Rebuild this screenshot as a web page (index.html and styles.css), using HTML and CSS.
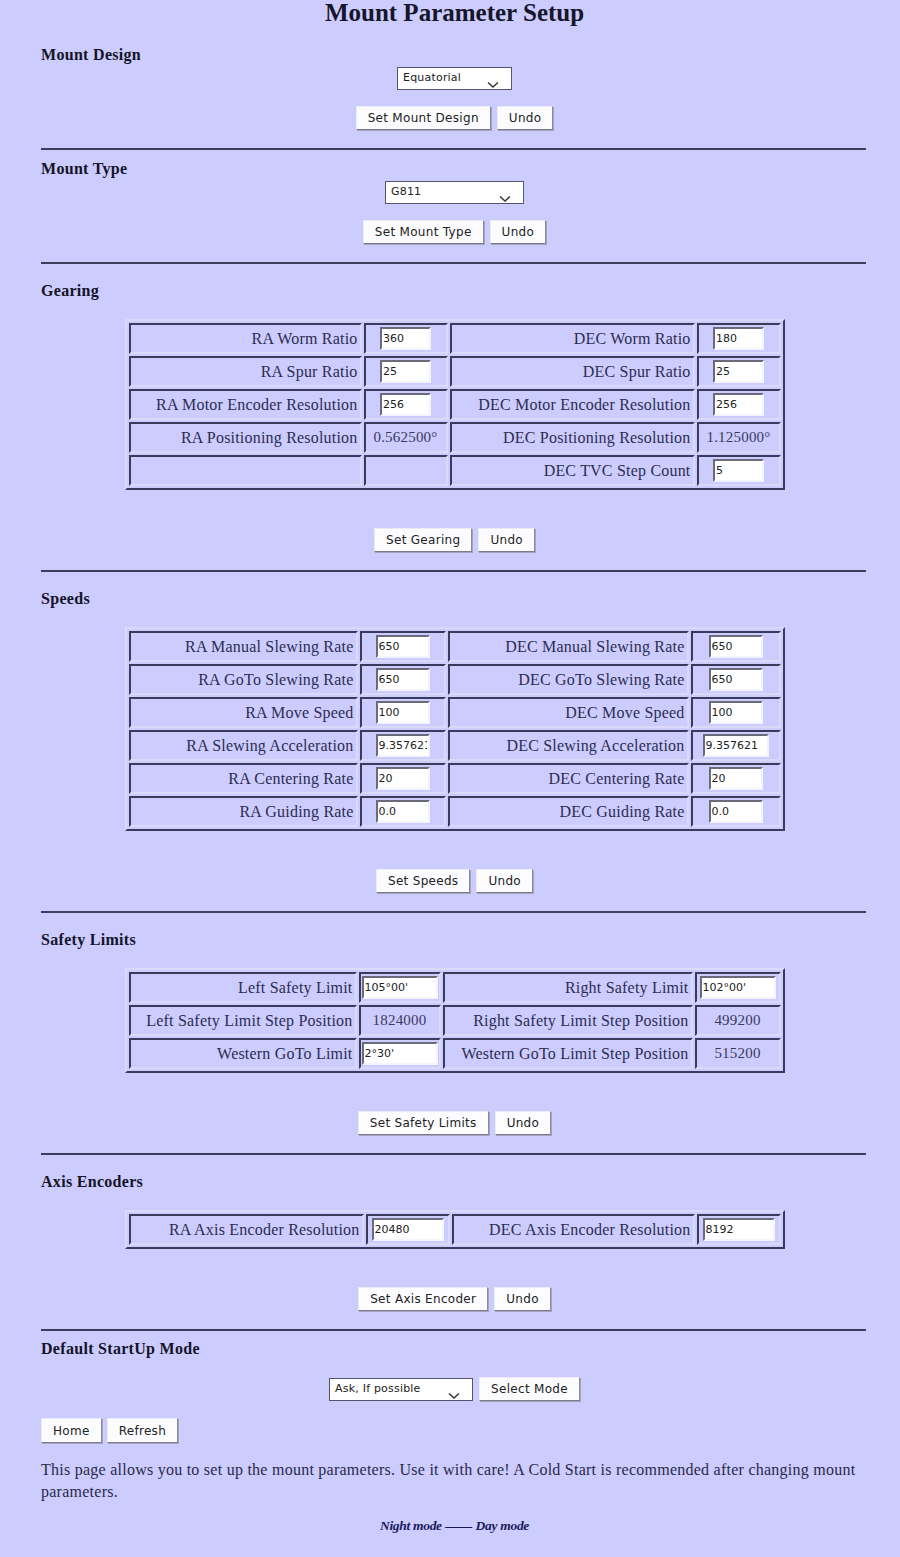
FILE: index.html
```html
<!DOCTYPE html>
<html lang="en">
<head>
<meta charset="utf-8">
<title>Mount Parameter Setup</title>
<link rel="stylesheet" href="styles.css">
</head>
<body>
<h1 class="title">Mount Parameter Setup</h1>

<section class="sec sec-first">
  <h3 class="sec-h">Mount Design</h3>
  <div class="sel-row">
    <span class="sel sel-design">Equatorial<svg class="chev" viewBox="0 0 12 6" width="12" height="6"><path d="M1 0.5 L6 5 L11 0.5" fill="none" stroke="#333" stroke-width="1.4"/></svg></span>
  </div>
  <div class="btn-row"><button class="btn">Set Mount Design</button><button class="btn">Undo</button></div>
</section>
<hr class="rule">

<section class="sec sec-simple">
  <h3 class="sec-h">Mount Type</h3>
  <div class="sel-row">
    <span class="sel sel-type">G811<svg class="chev" viewBox="0 0 12 6" width="12" height="6"><path d="M1 0.5 L6 5 L11 0.5" fill="none" stroke="#333" stroke-width="1.4"/></svg></span>
  </div>
  <div class="btn-row"><button class="btn">Set Mount Type</button><button class="btn">Undo</button></div>
</section>
<hr class="rule">

<section class="sec sec-table">
  <h3 class="sec-h">Gearing</h3>
  <table class="grid grid-gear">
    <colgroup><col class="c-l1"><col class="c-i1"><col class="c-l2"><col class="c-i2"></colgroup>
    <tr><td class="lbl">RA Worm Ratio</td><td class="inp"><input class="fld fld-s" value="360"></td><td class="lbl">DEC Worm Ratio</td><td class="inp"><input class="fld fld-s" value="180"></td></tr>
    <tr><td class="lbl">RA Spur Ratio</td><td class="inp"><input class="fld fld-s" value="25"></td><td class="lbl">DEC Spur Ratio</td><td class="inp"><input class="fld fld-s" value="25"></td></tr>
    <tr><td class="lbl">RA Motor Encoder Resolution</td><td class="inp"><input class="fld fld-s" value="256"></td><td class="lbl">DEC Motor Encoder Resolution</td><td class="inp"><input class="fld fld-s" value="256"></td></tr>
    <tr><td class="lbl">RA Positioning Resolution</td><td class="val">0.562500&deg;</td><td class="lbl">DEC Positioning Resolution</td><td class="val">1.125000&deg;</td></tr>
    <tr><td class="lbl"></td><td class="val"></td><td class="lbl">DEC TVC Step Count</td><td class="inp"><input class="fld fld-s" value="5"></td></tr>
  </table>
  <div class="btn-row"><button class="btn">Set Gearing</button><button class="btn">Undo</button></div>
</section>
<hr class="rule">

<section class="sec sec-table">
  <h3 class="sec-h">Speeds</h3>
  <table class="grid grid-speed">
    <colgroup><col class="c-l1"><col class="c-i1"><col class="c-l2"><col class="c-i2"></colgroup>
    <tr><td class="lbl">RA Manual Slewing Rate</td><td class="inp"><input class="fld fld-m" value="650"></td><td class="lbl">DEC Manual Slewing Rate</td><td class="inp"><input class="fld fld-m" value="650"></td></tr>
    <tr><td class="lbl">RA GoTo Slewing Rate</td><td class="inp"><input class="fld fld-m" value="650"></td><td class="lbl">DEC GoTo Slewing Rate</td><td class="inp"><input class="fld fld-m" value="650"></td></tr>
    <tr><td class="lbl">RA Move Speed</td><td class="inp"><input class="fld fld-m" value="100"></td><td class="lbl">DEC Move Speed</td><td class="inp"><input class="fld fld-m" value="100"></td></tr>
    <tr><td class="lbl">RA Slewing Acceleration</td><td class="inp"><input class="fld fld-m" value="9.357621"></td><td class="lbl">DEC Slewing Acceleration</td><td class="inp"><input class="fld fld-w" value="9.357621"></td></tr>
    <tr><td class="lbl">RA Centering Rate</td><td class="inp"><input class="fld fld-m" value="20"></td><td class="lbl">DEC Centering Rate</td><td class="inp"><input class="fld fld-m" value="20"></td></tr>
    <tr><td class="lbl">RA Guiding Rate</td><td class="inp"><input class="fld fld-m" value="0.0"></td><td class="lbl">DEC Guiding Rate</td><td class="inp"><input class="fld fld-m" value="0.0"></td></tr>
  </table>
  <div class="btn-row"><button class="btn">Set Speeds</button><button class="btn">Undo</button></div>
</section>
<hr class="rule">

<section class="sec sec-table">
  <h3 class="sec-h">Safety Limits</h3>
  <table class="grid grid-safety">
    <colgroup><col class="c-l1"><col class="c-i1"><col class="c-l2"><col class="c-i2"></colgroup>
    <tr><td class="lbl">Left Safety Limit</td><td class="inp"><input class="fld fld-l" value="105&deg;00'"></td><td class="lbl">Right Safety Limit</td><td class="inp"><input class="fld fld-l" value="102&deg;00'"></td></tr>
    <tr><td class="lbl">Left Safety Limit Step Position</td><td class="val">1824000</td><td class="lbl">Right Safety Limit Step Position</td><td class="val">499200</td></tr>
    <tr><td class="lbl">Western GoTo Limit</td><td class="inp"><input class="fld fld-l" value="2&deg;30'"></td><td class="lbl">Western GoTo Limit Step Position</td><td class="val">515200</td></tr>
  </table>
  <div class="btn-row"><button class="btn">Set Safety Limits</button><button class="btn">Undo</button></div>
</section>
<hr class="rule">

<section class="sec sec-table">
  <h3 class="sec-h">Axis Encoders</h3>
  <table class="grid grid-axis">
    <colgroup><col class="c-l1"><col class="c-i1"><col class="c-l2"><col class="c-i2"></colgroup>
    <tr><td class="lbl">RA Axis Encoder Resolution</td><td class="inp"><input class="fld fld-a" value="20480"></td><td class="lbl">DEC Axis Encoder Resolution</td><td class="inp"><input class="fld fld-a" value="8192"></td></tr>
  </table>
  <div class="btn-row"><button class="btn">Set Axis Encoder</button><button class="btn">Undo</button></div>
</section>
<hr class="rule">

<section class="sec sec-mode">
  <h3 class="sec-h">Default StartUp Mode</h3>
  <div class="sel-row">
    <span class="sel sel-mode">Ask, If possible<svg class="chev" viewBox="0 0 12 6" width="12" height="6"><path d="M1 0.5 L6 5 L11 0.5" fill="none" stroke="#333" stroke-width="1.4"/></svg></span><button class="btn">Select Mode</button>
  </div>
  <div class="nav-row"><button class="btn">Home</button><button class="btn">Refresh</button></div>
  <p class="note">This page allows you to set up the mount parameters. Use it with care! A Cold Start is recommended after changing mount parameters.</p>
  <p class="modes"><a class="mode-link">Night mode</a> &mdash;&mdash; <a class="mode-link">Day mode</a></p>
</section>
</body>
</html>
```

FILE: styles.css
```css
html, body {
  background: #ccccff;
}
body {
  margin: 0;
  padding: 0 32px 20px 41px;
  font-family: "Liberation Serif", "Times New Roman", serif;
  color: #1c1c36;
}

.title {
  margin: 0;
  font-size: 25px;
  line-height: 26px;
  font-weight: bold;
  text-align: center;
  color: #16162a;
}

.sec-h {
  margin: 17px 0 0;
  font-size: 16px;
  line-height: 20px;
  font-weight: bold;
  letter-spacing: 0.3px;
  color: #141428;
}
.sec-first .sec-h { margin-top: 19px; }
.sec-simple .sec-h { margin-top: 9px; }
.sec-mode .sec-h { margin-top: 8px; }

.rule {
  border: 0;
  height: 2px;
  background: #3d3d5e;
  margin: 18px 2px 0 0;
}

.sel-row {
  display: flex;
  justify-content: center;
  align-items: center;
  gap: 6px;
  margin-top: 2px;
}
.sec-mode .sel-row { margin-top: 18px; }

.sel {
  position: relative;
  display: inline-flex;
  align-items: center;
  box-sizing: border-box;
  height: 23px;
  padding: 0 5px 2px;
  background: #ffffff;
  border: 1px solid #55556a;
  font-family: "DejaVu Sans", sans-serif;
  font-size: 11px;
  letter-spacing: 0.2px;
  color: #222;
}
.sel-design { width: 115px; }
.sel-type { width: 139px; }
.sel-mode { width: 144px; }
.chev {
  position: absolute;
  right: 12px;
  bottom: 1px;
}

.btn-row, .nav-row {
  display: flex;
  gap: 6px;
  margin-top: 16px;
}
.btn-row { justify-content: center; }
.nav-row { justify-content: flex-start; gap: 5px; margin-top: 17px; }

.btn {
  box-sizing: border-box;
  height: 24px;
  padding: 0 11px;
  margin: 0;
  background: #fcfcff;
  border: 1px solid;
  border-color: #ececf6 #8a8a9c #7a7a8c #ececf6;
  box-shadow: 1px 1px 0 #a4a4bc;
  font-family: "DejaVu Sans", sans-serif;
  font-size: 12px;
  letter-spacing: 0.3px;
  color: #222;
  cursor: default;
}
.nav-row .btn { height: 25px; }

.grid {
  margin: 18px auto 0;
  width: 659px;
  table-layout: fixed;
  border-collapse: separate;
  border-spacing: 2px;
  border: 2px solid;
  border-color: #dadaf8 #3a3a5c #3a3a5c #dadaf8;
}
.grid + .btn-row { margin-top: 38px; }

.grid td {
  box-sizing: border-box;
  height: 31px;
  padding: 0 2px;
  border: 2px solid;
  border-color: #3a3a5c #dadaf8 #dadaf8 #3a3a5c;
  vertical-align: middle;
  font-size: 16px;
  letter-spacing: 0.2px;
  color: #2c2c50;
  white-space: nowrap;
  overflow: hidden;
}
.grid td.lbl { text-align: right; }
.grid td.inp { text-align: center; padding: 0; }
.grid td.val { text-align: center; font-size: 15px; color: #3a3a5e; padding: 0; }

.grid-gear .c-l1 { width: 233px; }
.grid-gear .c-i1 { width: 84px; }
.grid-gear .c-l2 { width: 245px; }
.grid-gear .c-i2 { width: 84px; }

.grid-speed .c-l1 { width: 229px; }
.grid-speed .c-i1 { width: 86px; }
.grid-speed .c-l2 { width: 241px; }
.grid-speed .c-i2 { width: 90px; }

.grid-safety .c-l1 { width: 228px; }
.grid-safety .c-i1 { width: 82px; }
.grid-safety .c-l2 { width: 250px; }
.grid-safety .c-i2 { width: 86px; }

.grid-axis .c-l1 { width: 235px; }
.grid-axis .c-i1 { width: 84px; }
.grid-axis .c-l2 { width: 243px; }
.grid-axis .c-i2 { width: 84px; }

.fld {
  box-sizing: border-box;
  height: 23px;
  padding: 0 1px;
  margin: 0;
  background: #ffffff;
  border: 2px solid;
  border-color: #6a6a7a #f4f4ff #f4f4ff #6a6a7a;
  font-family: "DejaVu Sans", sans-serif;
  font-size: 11px;
  color: #222;
  vertical-align: middle;
}
.fld-s { width: 51px; }
.fld-m { width: 54px; }
.fld-w { width: 66px; }
.fld-l { width: 76px; }
.fld-a { width: 72px; }

.note {
  margin: 16px 0 0;
  font-size: 16px;
  line-height: 22px;
  letter-spacing: 0.25px;
  color: #2a2a48;
}

.modes {
  margin: 14px 0 0;
  text-align: center;
  font-size: 13.5px;
  line-height: 18px;
  font-style: italic;
  font-weight: bold;
  color: #1a1a5a;
}
.mode-link {
  color: #1a1a5a;
  letter-spacing: -0.3px;
}
```
